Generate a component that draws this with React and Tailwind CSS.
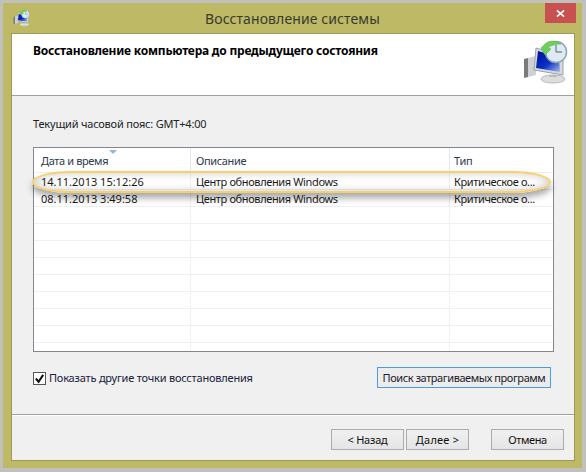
const rowLines = [0, 1, 2, 3, 4, 5, 6, 7];

function RestoreIcon({ className }) {
  return (
    <svg viewBox="0 0 48 48" className={className}>
      <defs>
        <linearGradient id="scr" x1="0" y1="0" x2="1" y2="1">
          <stop offset="0" stopColor="#00109a" />
          <stop offset="0.55" stopColor="#0a2fc4" />
          <stop offset="1" stopColor="#a9bce8" />
        </linearGradient>
      </defs>
      <path d="M4 21l4-1v19l-4 1z" fill="#777b7d" />
      <path d="M8 20l8-2v19l-8 2z" fill="#cfd1d2" />
      <path d="M16 10l27 8v19l-29-5z" fill="#d6dadd" stroke="#9ca3a8" />
      <path d="M18 13l21 6 1 15-24-4z" fill="url(#scr)" />
      <ellipse cx="33" cy="41" rx="12" ry="4" fill="#dcdddd" stroke="#b9bbbc" />
      <path d="M29 37h8v2h-8z" fill="#b9bbbc" />
      <circle cx="36" cy="14" r="10.5" fill="#dfeaf2" stroke="#8ea6b8" strokeWidth="1.5" />
      <path d="M36 7v7h6" fill="none" stroke="#55626c" strokeWidth="1" />
      <path d="M21 10l4 7 6-6-3-1c3-3 8-4 13-4-5-4-13-4-17 1z" fill="#6fce5c" stroke="#55b043" strokeWidth="0.5" />
    </svg>
  );
}

function Button({ children, className }) {
  return (
    <button className={"h-[21px] border border-[#acacac] bg-gradient-to-b from-[#f0f0f0] to-[#e5e5e5] text-[#111] " + className}>
      {children}
    </button>
  );
}

export default function App() {
  return (
    <div className="w-[586px] h-[472px] bg-[#c0c0bc] pt-[3px] pl-[3px] pr-[4px] overflow-hidden text-[11px] leading-[16px] tracking-[-0.2px] text-[#1a1a1a] font-['Noto_Sans','Open_Sans',sans-serif]">
      <div className="h-[465px] bg-[#bdb965] flex flex-col pl-[8px] pr-[7px] pb-[7px]">
        <div className="h-[30px] shrink-0 flex items-start">
          <RestoreIcon className="w-[18px] h-[18px] mt-[6px] ml-[1px]" />
          <div className="flex-1 text-center text-[14px] tracking-[0.1px] leading-[20px] mt-[6px] text-[#3a3a30] pl-[10px]">Восстановление системы</div>
          <div className="w-[31px] h-[20px] bg-[#c75050] flex items-center justify-center -mr-[1px]">
            <svg viewBox="0 0 10 10" className="w-[9px] h-[9px]">
              <path d="M1 1.5l8 7M9 1.5l-8 7" stroke="#fff" strokeWidth="1.8" />
            </svg>
          </div>
        </div>
        <div className="flex-1 border border-[#9d9a55] bg-[#f0f0f0] flex flex-col">
          <div className="h-[62px] shrink-0 bg-white border-b border-[#a0a0a0] flex justify-between pl-[21px] pr-[6px]">
            <div className="font-bold text-[12px] tracking-[-0.22px] leading-[16px] mt-[9px] text-black">Восстановление компьютера до предыдущего состояния</div>
            <RestoreIcon className="w-[48px] h-[48px] mt-[4px]" />
          </div>
          <div className="flex-1 flex flex-col pl-[21px] pr-[20px]">
            <div className="mt-[20px] h-[16px] text-[#222]">Текущий часовой пояс: GMT+4:00</div>
            <div className="mt-[15px] h-[205px] shrink-0 border border-[#828790] bg-white relative tracking-[-0.37px]">
              <div className="h-[25px] flex text-[#2b3a4a] border-b border-[#edf0f3]">
                <div className="w-[157px] pl-[7px] pt-[5px] border-r border-[#e3e8ee] relative">
                  <div className="absolute left-[75px] top-[2px] w-0 h-0 border-x-[4px] border-x-transparent border-t-[4px] border-t-[#8fb8d8]"></div>
                  Дата и время
                </div>
                <div className="w-[259px] pl-[5px] pt-[5px] border-r border-[#e3e8ee]">Описание</div>
                <div className="flex-1 pl-[4px] pt-[5px]">Тип</div>
              </div>
              <div className="flex h-[17px] pt-[1px] border-b border-[#edf0f3]">
                <div className="w-[157px] pl-[7px] tracking-[0px] border-r border-[#edf0f3]">14.11.2013 15:12:26</div>
                <div className="w-[259px] pl-[5px] border-r border-[#edf0f3]">Центр обновления Windows</div>
                <div className="flex-1 pl-[4px] truncate">Критическое о...</div>
              </div>
              <div className="flex h-[17px] pt-[1px] border-b border-[#edf0f3]">
                <div className="w-[157px] pl-[7px] tracking-[0px] border-r border-[#edf0f3]">08.11.2013 3:49:58</div>
                <div className="w-[259px] pl-[5px] border-r border-[#edf0f3]">Центр обновления Windows</div>
                <div className="flex-1 pl-[4px] truncate">Критическое о...</div>
              </div>
              {rowLines.map((i) => (
                <div key={i} className="flex h-[17px] border-b border-[#f0f0f0]">
                  <div className="w-[157px] border-r border-[#f0f0f0]"></div>
                  <div className="w-[259px] border-r border-[#f0f0f0]"></div>
                </div>
              ))}
              <div className="flex h-[8px]">
                <div className="w-[157px] border-r border-[#f0f0f0]"></div>
                <div className="w-[259px] border-r border-[#f0f0f0]"></div>
              </div>
              <div className="absolute left-[-2px] top-[23px] w-[519px] h-[22px] rounded-[40px/11px] border-2 border-[#f7cf6b] shadow-[0_5px_7px_rgba(0,0,0,0.35),inset_0_0_8px_rgba(0,0,0,0.22)]"></div>
            </div>
            <div className="mt-[15px] flex justify-between items-start">
              <label className="flex items-center gap-[3px] mt-[3px] text-[#16213a]">
                <span className="w-[13px] h-[13px] border border-[#555] bg-white flex items-center justify-center">
                  <svg viewBox="0 0 12 12" className="w-[11px] h-[11px]">
                    <path d="M2 6l3 3.5L10 2" fill="none" stroke="#111" strokeWidth="2.2" />
                  </svg>
                </span>
                Показать другие точки восстановления
              </label>
              <button className="h-[21px] w-[174px] mr-[3px] whitespace-nowrap tracking-[-0.42px] border border-[#4a9be8] bg-[#ececec] text-[#1a1a2a]">Поиск затрагиваемых программ</button>
            </div>
            <div className="mt-[26px] -ml-[21px] -mr-[20px] border-t border-[#a0a0a0] shadow-[0_1px_0_#fff]"></div>
            <div className="mt-[14px] flex justify-end -mr-[10px]">
              <Button className="w-[73px]">&lt; Назад</Button>
              <Button className="w-[63px] ml-[2px] tracking-[0.2px]">Далее &gt;</Button>
              <Button className="w-[73px] ml-[22px] tracking-[-0.4px]">Отмена</Button>
            </div>
          </div>
        </div>
      </div>
    </div>
  );
}
